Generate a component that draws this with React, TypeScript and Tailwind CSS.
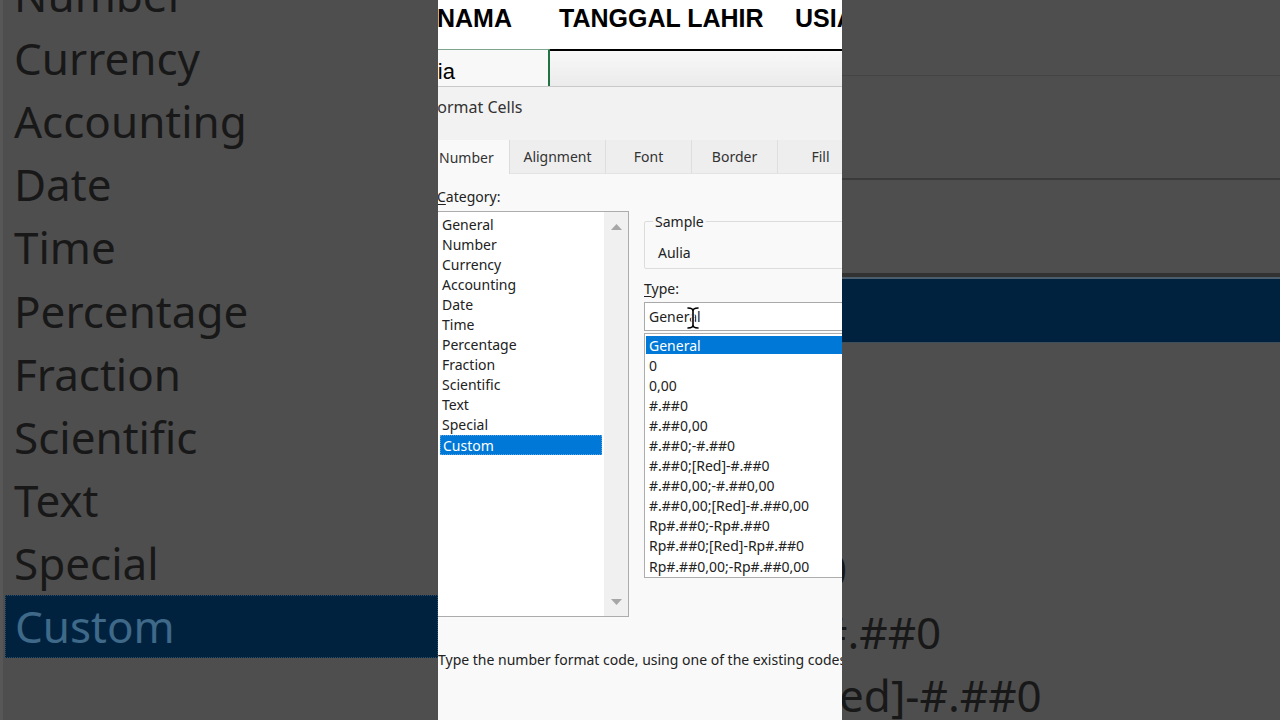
import React from "react";

const categories = [
  "General",
  "Number",
  "Currency",
  "Accounting",
  "Date",
  "Time",
  "Percentage",
  "Fraction",
  "Scientific",
  "Text",
  "Special",
  "Custom",
];

const types = [
  "General",
  "0",
  "0,00",
  "#.##0",
  "#.##0,00",
  "#.##0;-#.##0",
  "#.##0;[Red]-#.##0",
  "#.##0,00;-#.##0,00",
  "#.##0,00;[Red]-#.##0,00",
  "Rp#.##0;-Rp#.##0",
  "Rp#.##0;[Red]-Rp#.##0",
  "Rp#.##0,00;-Rp#.##0,00",
];

const tabs = [
  { label: "Alignment", w: "w-[96px]" },
  { label: "Font", w: "w-[86px]" },
  { label: "Border", w: "w-[86px]" },
  { label: "Fill", w: "w-[86px]" },
];

// zoomed, dimmed copy of the category list on the left
const ZoomLeft = () => (
  <div className="w-[438px] h-full shrink-0 overflow-hidden bg-[#4e4e4e] border-l-[3px] border-[#575757]">
    <div className="mt-[-37px] flex flex-col">
      {categories.slice(1).map((c) =>
        c === "Custom" ? (
          <div
            key={c}
            className="h-[63.2px] ml-[2px] flex items-center pl-[9px] bg-[#01223f] border border-dotted border-[#2a4a66] text-[44px] text-[#3f6988]"
          >
            {c}
          </div>
        ) : (
          <div key={c} className="h-[63.2px] flex items-center pl-[11px] text-[44px] text-[#181818]">
            {c}
          </div>
        )
      )}
    </div>
  </div>
);

// zoomed, dimmed copy of the type area on the right
const ZoomRight = () => (
  <div className="w-[438px] h-full shrink-0 overflow-hidden bg-[#4e4e4e] flex flex-col">
    <div className="h-[75px] shrink-0" />
    <div className="h-[1px] shrink-0 bg-[#434343]" />
    <div className="h-[102px] shrink-0" />
    <div className="h-[2px] shrink-0 bg-[#3a3a3a]" />
    <div className="h-[93px] shrink-0" />
    <div className="h-[4px] shrink-0 bg-[#323232]" />
    <div className="h-[2px] shrink-0 bg-[#4c5d6b]" />
    <div className="h-[63px] shrink-0 bg-[#00223f]" />
    <div className="h-[1px] shrink-0 bg-[#3d4d5a]" />
    <div className="h-[194px] shrink-0" />
    <div className="flex flex-col text-[44px] text-[#181818] whitespace-nowrap">
      <div className="h-[63.2px] flex items-center -ml-[20px]">0</div>
      <div className="h-[63.2px] flex items-center -ml-[23px]">#.##0</div>
      <div className="h-[63.2px] flex items-center -ml-[3px]">ed]-#.##0</div>
    </div>
  </div>
);

const IBeam = () => (
  <svg width="14" height="24" viewBox="0 0 14 24" className="absolute left-[41px] top-[3px]">
    <g fill="none" strokeLinecap="round">
      <path d="M2 2 Q7 2 7 5 Q7 2 12 2 M7 5 V19 M2 22 Q7 22 7 19 Q7 22 12 22" stroke="#fff" strokeWidth="3.5" />
      <path d="M2 2 Q7 2 7 5 Q7 2 12 2 M7 5 V19 M2 22 Q7 22 7 19 Q7 22 12 22" stroke="#000" strokeWidth="1.6" />
    </g>
  </svg>
);

const Dialog = () => (
  <div className="w-[404px] h-full shrink-0 overflow-hidden flex flex-col bg-white text-[14px] text-[#222]">
    {/* spreadsheet header row */}
    <div className="h-[49px] shrink-0 flex pt-[6px] font-['Liberation_Sans',Arial,sans-serif] font-bold text-[25px] leading-[25px] text-black whitespace-nowrap">
      <span className="w-[122px] shrink-0 -ml-[1px]">NAMA</span>
      <span className="w-[236px] shrink-0">TANGGAL LAHIR</span>
      <span>USIA</span>
    </div>
    {/* selected cell row */}
    <div className="h-[38px] shrink-0 flex border-b border-[#c9c9c9]">
      <div className="w-[112px] shrink-0 overflow-hidden bg-[#f8f8f8] border-t border-t-[#7fa58f] border-r-2 border-r-[#217346] flex items-center pt-[6px] font-['Liberation_Sans',Arial,sans-serif] text-[22px] text-black whitespace-nowrap">
        <span className="-ml-[32px]">Aulia</span>
      </div>
      <div className="flex-1 border-t-2 border-black bg-gradient-to-b from-[#f8f8f8] to-[#ebebeb]" />
    </div>
    {/* title */}
    <div className="h-[53px] shrink-0 bg-[#f2f2f2] pt-[10px] text-[16px] leading-[20px] text-[#333] whitespace-nowrap">
      <span className="block -ml-[9px]">Format Cells</span>
    </div>
    {/* tabs */}
    <div className="h-[34px] shrink-0 flex bg-[#f2f2f2] whitespace-nowrap">
      <div className="w-[72px] shrink-0 bg-[#f9f9f9] border-r border-[#dcdcdc] flex items-center pl-[1px] text-[#333]">
        Number
      </div>
      {tabs.map((t) => (
        <div
          key={t.label}
          className={`${t.w} shrink-0 bg-[#eeeeee] border-r border-[#dedede] border-b border-b-[#e4e4e4] flex items-center justify-center text-[#333]`}
        >
          {t.label}
        </div>
      ))}
    </div>
    {/* tab content */}
    <div className="flex-1 bg-[#f9f9f9] flex flex-col">
      <div className="flex">
        <div className="w-[191px] shrink-0 pt-[13px]">
          <div className="h-[20px] leading-[20px] -ml-[1px]">
            <span className="underline underline-offset-2">C</span>ategory:
          </div>
          <div className="mt-[4px] h-[406px] bg-white border border-l-0 border-[#acacac] flex">
            <div className="flex-1 pt-[2px] flex flex-col">
              {categories.map((c) =>
                c === "Custom" ? (
                  <div key={c} className="h-[20.1px] flex items-stretch pl-[2px] pr-[2px]">
                    <div className="flex-1 bg-[#0078d7] text-white flex items-center pl-[2px] border border-dotted border-[#5aa0dd]">
                      {c}
                    </div>
                  </div>
                ) : (
                  <div key={c} className="h-[20.1px] flex items-center pl-[4px]">
                    {c}
                  </div>
                )
              )}
            </div>
            <div className="w-[24px] shrink-0 bg-[#f0f0f0] flex flex-col items-center justify-between pt-[12px] pb-[11px]">
              <svg width="11" height="6" viewBox="0 0 11 6">
                <polygon points="0,6 5.5,0 11,6" fill="#a6a6a6" />
              </svg>
              <svg width="11" height="6" viewBox="0 0 11 6">
                <polygon points="0,0 5.5,6 11,0" fill="#a6a6a6" />
              </svg>
            </div>
          </div>
        </div>

        <div className="ml-[15px] w-[260px] shrink-0 pt-[47px]">
          <div className="relative h-[48px] border border-[#dcdcdc] rounded-[2px] pt-[21px] pl-[13px] leading-[20px]">
            <span className="absolute -top-[10px] left-[8px] px-[2px] bg-[#f9f9f9] leading-[20px]">Sample</span>
            Aulia
          </div>
          <div className="mt-[10px] h-[20px] leading-[20px]">
            <span className="underline underline-offset-2">T</span>ype:
          </div>
          <div className="relative mt-[3px] h-[29px] bg-white border border-[#a9a9a9] flex items-center pl-[4px]">
            General
            <IBeam />
          </div>
          <div className="mt-[2px] h-[245px] bg-white border border-[#adadad] pt-[1px] flex flex-col whitespace-nowrap">
            {types.map((t, i) =>
              i === 0 ? (
                <div key={t} className="h-[20.1px] flex items-stretch pl-[1px] py-[1px]">
                  <div className="flex-1 bg-[#0078d7] text-white flex items-center pl-[3px]">{t}</div>
                </div>
              ) : (
                <div key={t} className="h-[20.1px] flex items-center pl-[4px]">
                  {t}
                </div>
              )
            )}
          </div>
        </div>
      </div>
      <div className="mt-[33px] w-[404px] h-[20px] leading-[20px] overflow-hidden whitespace-nowrap text-[#222]">
        Type the number format code, using one of the existing codes as a starting point.
      </div>
    </div>
  </div>
);

export default function App() {
  return (
    <div className="w-[1280px] h-[720px] overflow-hidden flex bg-[#4e4e4e] font-['Noto_Sans',sans-serif]">
      <ZoomLeft />
      <Dialog />
      <ZoomRight />
    </div>
  );
}
